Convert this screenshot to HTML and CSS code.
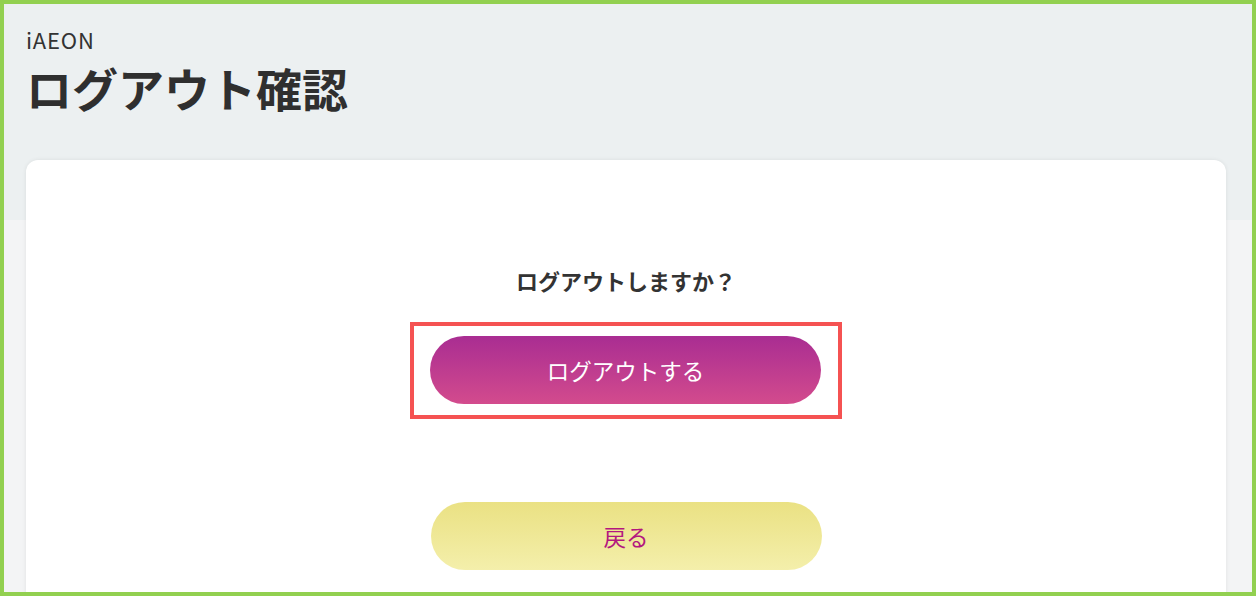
FILE: index.html
```html
<!DOCTYPE html>
<html lang="ja">
<head>
<meta charset="utf-8">
<link rel="stylesheet" href="styles.css">
</head>
<body>
<div class="frame">
  <header class="head">
    <div class="brand">iAEON</div>
    <h1 class="title">ログアウト確認</h1>
  </header>
  <main class="body">
    <section class="card">
      <p class="question">ログアウトしますか？</p>
      <div class="highlight">
        <button class="btn btn-primary">ログアウトする</button>
      </div>
      <button class="btn btn-back">戻る</button>
    </section>
  </main>
</div>
</body>
</html>
```
FILE: styles.css
```css
* { box-sizing: border-box; }
html, body { margin: 0; padding: 0; }
body {
  width: 1256px;
  height: 596px;
  overflow: hidden;
  font-family: "Noto Sans CJK JP", "Noto Sans", sans-serif;
  color: #333;
}
.frame {
  width: 1256px;
  height: 596px;
  border: 4px solid #92d050;
  background: #f3f4f5;
  overflow: hidden;
  display: flex;
  flex-direction: column;
}
.head {
  background: #ecf0f1;
  height: 216px;
  padding: 20px 0 0 22px;
  flex: none;
}
.brand {
  font-size: 22px;
  line-height: 30px;
  color: #333;
  letter-spacing: 0.8px;
}
.title {
  margin: 4px 0 0 0;
  font-size: 46px;
  line-height: 58px;
  font-weight: 700;
  color: #2f2f2f;
}
.body {
  margin-top: -60px;
  padding: 0 26px 0 22px;
  flex: 1;
}
.card {
  background: #fff;
  border-radius: 12px;
  box-shadow: 0 0 4px rgba(0,0,0,0.08);
  height: 600px;
  display: flex;
  flex-direction: column;
  align-items: center;
  padding-top: 104px;
}
.question {
  margin: 0;
  font-size: 22px;
  line-height: 32px;
  font-weight: 700;
  color: #333;
}
.highlight {
  margin-top: 26px;
  border: 4px solid #f55252;
  padding: 10px 17px 11px 16px;
}
.btn {
  width: 391px;
  height: 68px;
  border-radius: 34px;
  border: none;
  font-family: "Noto Sans CJK JP", "Noto Sans", sans-serif;
  font-size: 22.5px;
  display: block;
  cursor: pointer;
}
.btn-primary {
  background: linear-gradient(to bottom, #a92d92, #d34b8d);
  color: #fff;
}
.btn-back {
  margin-top: 83px;
  background: linear-gradient(to bottom, #eae183, #f4efab);
  color: #b3177f;
}
```
